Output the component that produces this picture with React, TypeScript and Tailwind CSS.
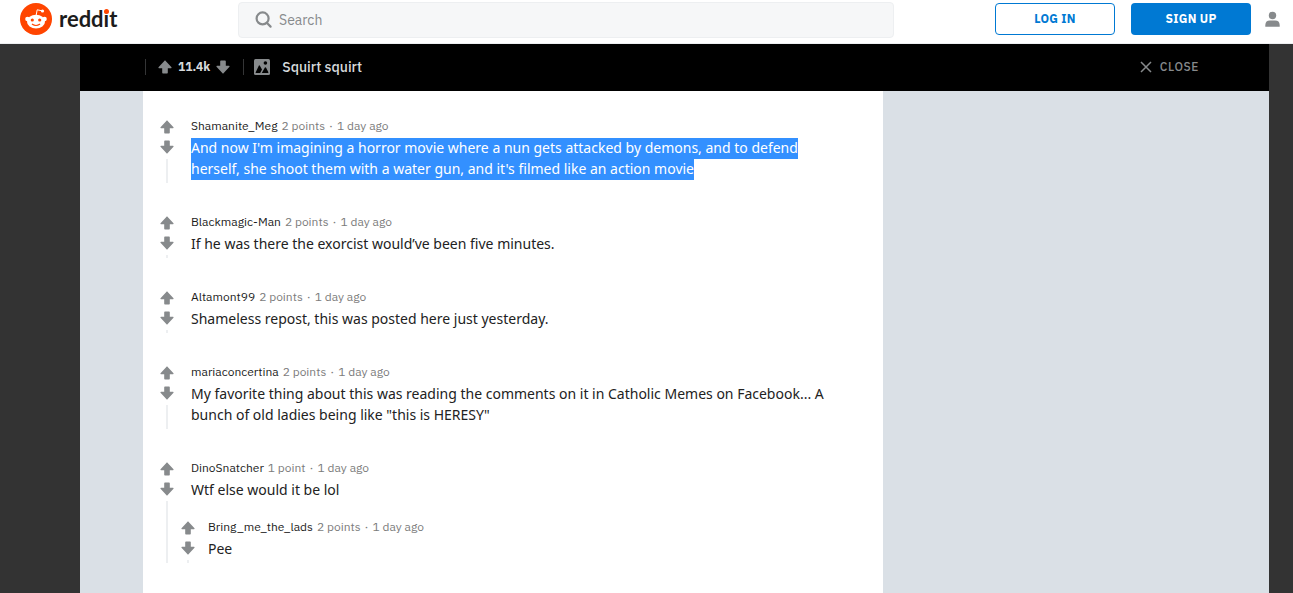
import React from 'react';

interface Comment {
  id: number;
  author: string;
  points: string;
  time: string;
  text: string;
  selected?: boolean;
  replies?: Comment[];
}

const COMMENTS: Comment[] = [
  {
    id: 1,
    author: 'Shamanite_Meg',
    points: '2 points',
    time: '1 day ago',
    text: "And now I'm imagining a horror movie where a nun gets attacked by demons, and to defend herself, she shoot them with a water gun, and it's filmed like an action movie",
    selected: true
  },
  { id: 2, author: 'Blackmagic-Man', points: '2 points', time: '1 day ago', text: 'If he was there the exorcist would’ve been five minutes.' },
  { id: 3, author: 'Altamont99', points: '2 points', time: '1 day ago', text: 'Shameless repost, this was posted here just yesterday.' },
  {
    id: 4,
    author: 'mariaconcertina',
    points: '2 points',
    time: '1 day ago',
    text: 'My favorite thing about this was reading the comments on it in Catholic Memes on Facebook... A bunch of old ladies being like "this is HERESY"'
  },
  {
    id: 5,
    author: 'DinoSnatcher',
    points: '1 point',
    time: '1 day ago',
    text: 'Wtf else would it be lol',
    replies: [{ id: 6, author: 'Bring_me_the_lads', points: '2 points', time: '1 day ago', text: 'Pee' }]
  }
];

const VoteArrow: React.FC<{ down?: boolean }> = ({ down }) => (
  <svg viewBox="0 0 14 14" className={`block h-3.5 w-3.5 ${down ? 'rotate-180' : ''}`} fill="currentColor" aria-hidden="true">
    <path d="M7 .2 13.5 7.2Q13.9 8.2 12.9 8.2H9.8V12.8Q9.8 13.6 9 13.6H5Q4.2 13.6 4.2 12.8V8.2H1.1Q.1 8.2 .5 7.2Z" />
  </svg>
);

const VoteButton: React.FC<{ down?: boolean }> = ({ down }) => (
  <button type="button" aria-label={down ? 'downvote' : 'upvote'} className="shrink-0 text-[#878a8c]">
    <VoteArrow down={down} />
  </button>
);

const Snoo = () => (
  <svg viewBox="0 0 32 32" className="h-8 w-8" aria-hidden="true">
    <circle cx="16" cy="16" r="16" fill="#ff4500" />
    <path d="M16.2 12 17.2 6.8 22 7.8" fill="none" stroke="#fff" strokeWidth="1" />
    <circle cx="22.5" cy="8" r="1.6" fill="#fff" />
    <circle cx="7.5" cy="16" r="2.3" fill="#fff" />
    <circle cx="24.5" cy="16" r="2.3" fill="#fff" />
    <ellipse cx="16" cy="18.7" rx="9" ry="6.9" fill="#fff" />
    <circle cx="12.3" cy="17" r="1.6" fill="#ff4500" />
    <circle cx="19.7" cy="17" r="1.6" fill="#ff4500" />
    <path d="M12.3 21.2Q16 23.7 19.7 21.2" fill="none" stroke="#ff4500" strokeWidth="1.1" strokeLinecap="round" />
  </svg>
);

const Header = () => (
  <header className="flex h-11 items-start border-b border-[#edeff1] bg-white pr-3 pl-5">
    <a href="#" aria-label="reddit home" className="mt-[3px] flex w-[218px] shrink-0 items-center gap-[7px]">
      <Snoo />
      <span className="relative font-[Lato,sans-serif] text-[22px] leading-8 font-bold text-[#1c1c1c]">
        reddit
        <span className="absolute top-[6px] right-[8px] h-[5px] w-[5px] rounded-full bg-[#ff4500]" />
      </span>
    </a>
    <label className="mt-0.5 flex h-9 max-w-[656px] flex-1 items-center gap-1.5 rounded border border-[#edeff1] bg-[#f6f7f8] px-4">
      <svg viewBox="0 0 18 18" className="h-[18px] w-[18px]" fill="none" stroke="#878a8c" strokeWidth="2.2" aria-hidden="true">
        <circle cx="7.6" cy="7.4" r="6" />
        <path d="M12 12 15.6 15.6" strokeLinecap="round" />
      </svg>
      <input type="search" aria-label="Search" placeholder="Search" className="min-w-0 flex-1 bg-transparent text-sm outline-none placeholder:text-[#878a8c]" />
    </label>
    <div className="mt-[3px] ml-auto flex items-center text-xs font-bold tracking-wide">
      <button type="button" className="h-8 w-[120px] rounded border border-[#0079d3] text-[#0079d3]">LOG IN</button>
      <button type="button" className="ml-4 h-8 w-[120px] rounded bg-[#0079d3] text-white">SIGN UP</button>
      <button type="button" aria-label="User menu" className="ml-3.5 text-[#878a8c]">
        <svg viewBox="0 0 16 16" className="h-4 w-4" fill="currentColor" aria-hidden="true">
          <circle cx="7.5" cy="4.5" r="3.7" />
          <path d="M.3 15.8V14Q.5 9.6 4.9 9.6H10.1Q14.5 9.6 14.7 14V15.8Z" />
        </svg>
      </button>
    </div>
  </header>
);

const PostBar = () => (
  <div className="flex h-[47px] items-center bg-black pr-[70px] pb-px pl-[65px]">
    <div className="flex h-4 items-center gap-1.5 border-x border-[#343536] pr-[13px] pl-3">
      <VoteButton />
      <span className="text-xs leading-4 font-bold text-[#d7dadc]">11.4k</span>
      <VoteButton down />
    </div>
    <svg viewBox="0 0 16 16" className="ml-2.5 h-4 w-4" aria-hidden="true">
      <rect width="16" height="16" rx="1.5" fill="#878a8c" />
      <circle cx="11.4" cy="4" r="1.8" fill="#000" />
      <path d="M1.6 13.4 4.9 6.6Q5.4 6 5.9 6.8L8 10.4 6.2 14H1.8ZM7.8 14 10.9 8.6Q11.5 8 12.1 8.8L14.4 13.2 14.2 14Z" fill="#000" />
    </svg>
    <h1 className="ml-3 text-sm font-medium text-[#d7dadc]">Squirt squirt</h1>
    <button type="button" className="ml-auto flex items-center gap-2 text-xs font-medium tracking-wider text-[#878a8c]">
      <svg viewBox="0 0 12 12" className="h-3 w-3" stroke="currentColor" strokeWidth="1.5" aria-hidden="true">
        <path d="M1 1 11 11M11 1 1 11" />
      </svg>
      CLOSE
    </button>
  </div>
);

const CommentItem: React.FC<{ comment: Comment; nested?: boolean }> = ({ comment, nested }) => (
  <article className="flex gap-[7px]">
    <div className="flex w-3.5 flex-col items-center pt-0.5">
      <VoteButton />
      <span className="h-1.5 shrink-0" />
      <VoteButton down />
      <span className="mt-[5px] w-0.5 flex-1 bg-[#edeff1]" />
    </div>
    <div className="min-w-0 flex-1 pb-1">
      <div className={nested ? 'pl-1.5' : 'pl-2.5'}>
        <div className="flex gap-1 text-xs leading-4 text-[#7c7c7c]">
          <a href="#" className="text-[#1c1c1c]">{comment.author}</a>
          <span>{comment.points}</span>
          <span>·</span>
          <span>{comment.time}</span>
        </div>
        <p className="mt-[3px] font-['Noto_Sans',sans-serif] text-sm leading-[21px] text-[#222]">
          {comment.selected ? <mark className="bg-[#3390ff] pb-0.5 text-white">{comment.text}</mark> : comment.text}
        </p>
      </div>
      {comment.replies && (
        <div className="-mb-1 pt-[19px]">
          {comment.replies.map((reply) => (
            <CommentItem key={reply.id} comment={reply} nested />
          ))}
        </div>
      )}
    </div>
  </article>
);

export default function App() {
  return (
    <div className="flex min-h-screen flex-col bg-[#333] font-['IBM_Plex_Sans','Noto_Sans',sans-serif]">
      <Header />
      <div className="mr-6 ml-20 flex flex-1 flex-col bg-[#dae0e6]">
        <PostBar />
        <main className="ml-[63px] flex max-w-[740px] flex-1 flex-col gap-[31px] bg-white pt-[27px] pr-10 pb-7 pl-[17px]">
          {COMMENTS.map((comment) => (
            <CommentItem key={comment.id} comment={comment} />
          ))}
        </main>
      </div>
    </div>
  );
}
